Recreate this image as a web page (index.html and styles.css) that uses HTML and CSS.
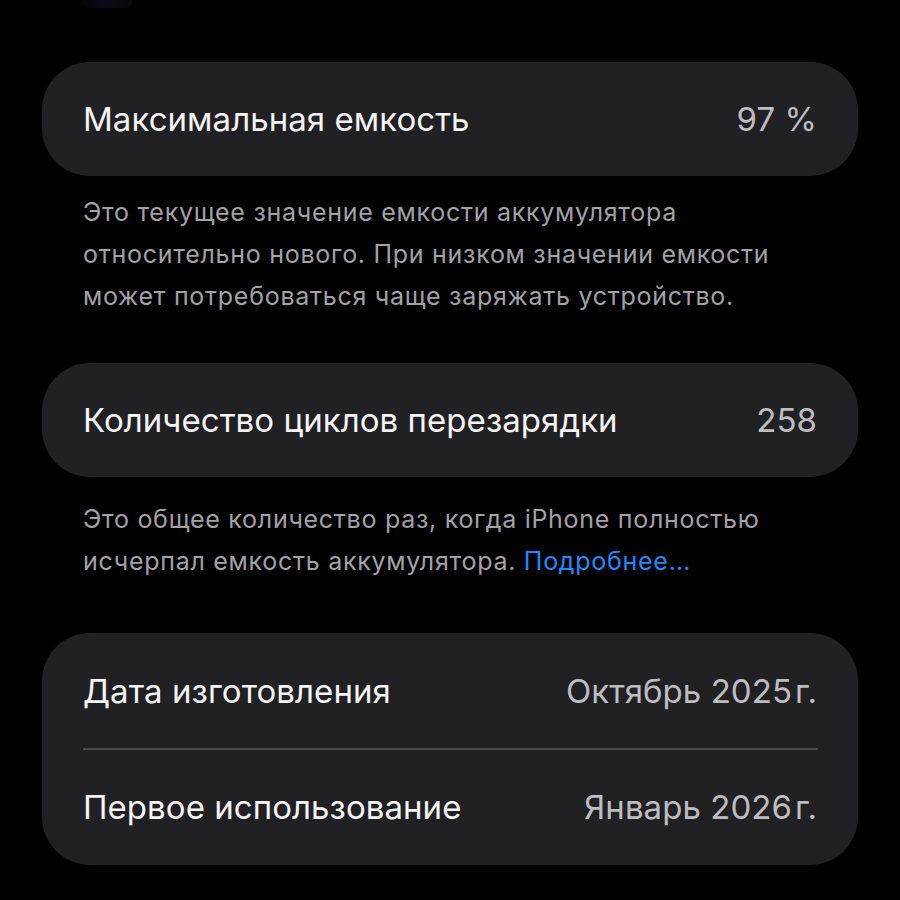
FILE: index.html
```html
<!DOCTYPE html>
<html lang="ru">
<head>
<meta charset="utf-8">
<link rel="stylesheet" href="styles.css">
</head>
<body>
<div class="page">
  <div class="topmark"></div>
  <section class="card card-first">
    <div class="row">
      <span class="label">Максимальная емкость</span>
      <span class="value">97 %</span>
    </div>
  </section>
  <p class="note note-first">Это текущее значение емкости аккумулятора относительно нового. При низком значении емкости может потребоваться чаще заряжать устройство.</p>

  <section class="card">
    <div class="row">
      <span class="label">Количество циклов перезарядки</span>
      <span class="value">258</span>
    </div>
  </section>
  <p class="note note-second">Это общее количество раз, когда iPhone полностью исчерпал емкость аккумулятора. <a class="link" href="#">Подробнее…</a></p>

  <section class="card card-list">
    <div class="row">
      <span class="label">Дата изготовления</span>
      <span class="value">Октябрь 2025&#8202;г.</span>
    </div>
    <div class="sep"></div>
    <div class="row">
      <span class="label">Первое использование</span>
      <span class="value">Январь 2026&#8202;г.</span>
    </div>
  </section>
</div>
</body>
</html>
```
FILE: styles.css
```css
html, body {
  margin: 0;
  padding: 0;
  background: #000;
}
body {
  width: 900px;
  height: 900px;
  overflow: hidden;
  font-family: Inter, "Noto Sans", "Liberation Sans", sans-serif;
  -webkit-font-smoothing: antialiased;
}
.page {
  padding: 0 42px;
  display: flex;
  flex-direction: column;
}
.topmark {
  height: 8px;
  width: 50px;
  margin-left: 40px;
  background: linear-gradient(90deg, #04040c, #0a0a1a, #0c070c);
  border-radius: 0 0 6px 6px;
}
.card {
  background: #212123;
  border-radius: 48px;
  margin-top: 46px;
}
.card-first {
  margin-top: 54px;
}
.row {
  height: 114px;
  padding: 0 41px;
  display: flex;
  align-items: center;
  justify-content: space-between;
  font-size: 33px;
  letter-spacing: 0.05px;
}
.label {
  color: #f4f4f5;
}
.value {
  color: #bdbdc1;
}
.card-list .row {
  height: 115px;
}
.sep {
  height: 1.5px;
  margin: 0 40px 0 41px;
  background: #4a4a4d;
}
.note {
  margin: 0;
  padding: 15px 41px 0 41px;
  font-size: 25px;
  line-height: 42px;
  color: #a2a2a7;
  letter-spacing: 0.72px;
}
.note-second {
  padding-top: 21px;
  margin-bottom: 5px;
}
.link {
  color: #1e8cff;
  text-decoration: none;
}
```
